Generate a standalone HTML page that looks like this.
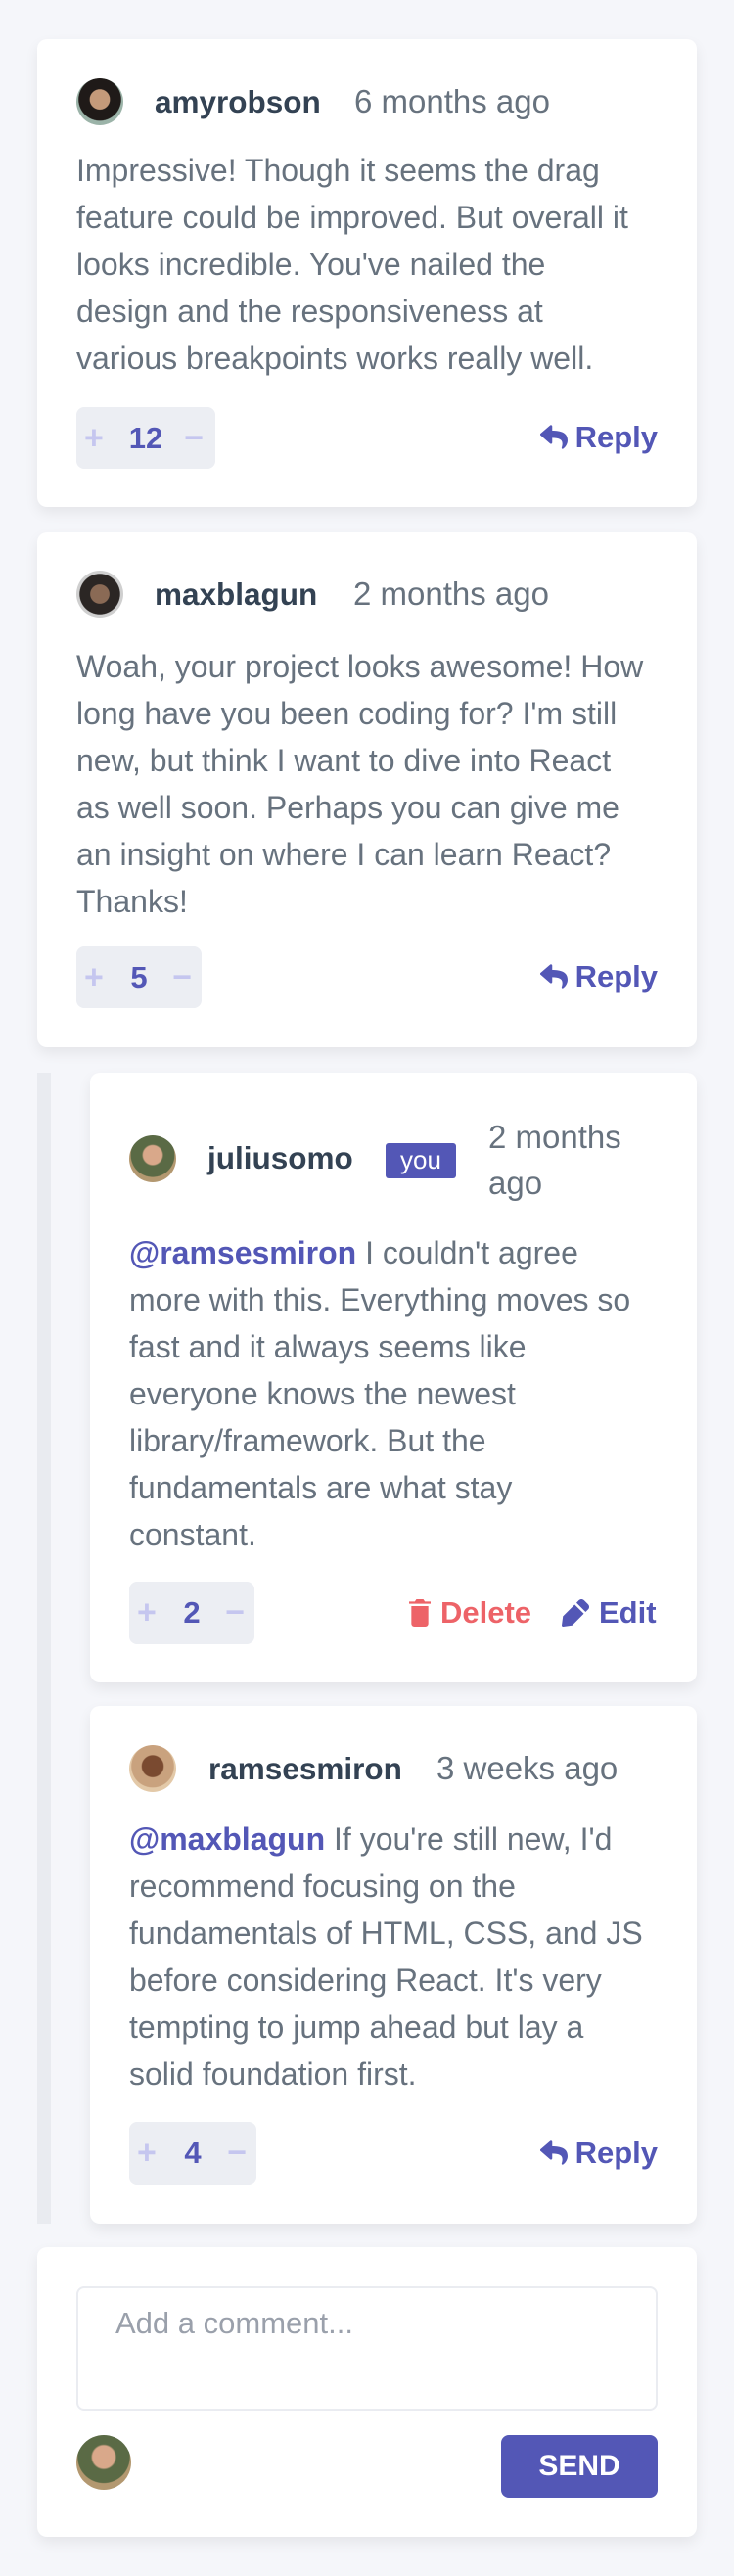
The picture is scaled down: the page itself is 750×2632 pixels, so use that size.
<!DOCTYPE html>
<html><head><meta charset="utf-8"><style>
*{margin:0;padding:0;box-sizing:border-box}
body{width:750px;height:2632px;background:#f5f6fa;font-family:"Liberation Sans",sans-serif;position:relative;overflow:hidden}
.card{position:absolute;background:#fff;border-radius:10px;box-shadow:0 6px 14px rgba(0,0,0,0.07)}
.a{position:absolute}
.av{position:absolute;width:48px;height:48px;border-radius:50%}
.name{position:absolute;font-size:31.5px;font-weight:bold;color:#334253;line-height:40px;transform:translateY(-50%)}
.time{position:absolute;font-size:33px;color:#67727e;line-height:40px}
.body{position:absolute;font-size:32px;color:#67727e;line-height:48px;white-space:nowrap}
.body b{color:#5357b6;font-weight:bold}
.vote{position:absolute;background:#eceef3;border-radius:8px;height:63px;font-size:31px;font-weight:bold;color:#5357b6}
.vote .p,.vote .m{position:absolute;top:50%;color:#c5c6ef;transform:translateY(-50%);font-size:34px;font-weight:bold}
.vote .n{position:absolute;top:50%;transform:translate(-50%,-50%);left:50%}
.act{position:absolute;font-size:31px;font-weight:bold;color:#5357b6;line-height:40px;display:flex;align-items:center;gap:8px}
</style></head><body>
<div class="a" style="left:38px;top:1096px;width:14px;height:1176px;background:#e9ebf0"></div>

<div class="card" style="left:38px;top:40px;width:674px;height:478px"></div>
<div class="av" style="left:78px;top:80px;background:radial-gradient(circle at 50% 45%,#c49a7a 0 28%,#1f1a18 30% 60%,#9bb3a8 62%)"></div>
<div class="name" style="left:158px;top:104px">amyrobson</div>
<div class="time" style="left:362px;top:84px">6 months ago</div>
<div class="body" style="left:78px;top:150px">Impressive! Though it seems the drag<br>feature could be improved. But overall it<br>looks incredible. You've nailed the<br>design and the responsiveness at<br>various breakpoints works really well.</div>
<div class="vote" style="left:78px;top:416px;width:142px"><span class="p" style="left:8px">+</span><span class="n">12</span><span class="m" style="right:12px">−</span></div>
<div class="act" style="right:78px;top:427px"><svg width="28" height="26" viewBox="0 0 14 13"><path d="M.23 4.46 5.05.31c.42-.36 1.08-.07 1.08.5v2.18c4.38.05 7.86.93 7.86 5.08 0 1.68-1.08 3.34-2.28 4.2-.37.27-.91-.07-.77-.51 1.23-3.94-.59-4.99-4.81-5.05v2.4c0 .57-.66.86-1.08.5L.23 5.46a.66.66 0 0 1 0-1z" fill="#5357b6"/></svg>Reply</div>

<div class="card" style="left:38px;top:544px;width:674px;height:526px"></div>
<div class="av" style="left:78px;top:583px;background:radial-gradient(circle at 50% 50%,#8a6a55 0 28%,#2b2624 30% 60%,#cfcfcf 62%)"></div>
<div class="name" style="left:158px;top:607px">maxblagun</div>
<div class="time" style="left:361px;top:587px">2 months ago</div>
<div class="body" style="left:78px;top:657px">Woah, your project looks awesome! How<br>long have you been coding for? I'm still<br>new, but think I want to dive into React<br>as well soon. Perhaps you can give me<br>an insight on where I can learn React?<br>Thanks!</div>
<div class="vote" style="left:78px;top:967px;width:128px"><span class="p" style="left:8px">+</span><span class="n">5</span><span class="m" style="right:10px">−</span></div>
<div class="act" style="right:78px;top:978px"><svg width="28" height="26" viewBox="0 0 14 13"><path d="M.23 4.46 5.05.31c.42-.36 1.08-.07 1.08.5v2.18c4.38.05 7.86.93 7.86 5.08 0 1.68-1.08 3.34-2.28 4.2-.37.27-.91-.07-.77-.51 1.23-3.94-.59-4.99-4.81-5.05v2.4c0 .57-.66.86-1.08.5L.23 5.46a.66.66 0 0 1 0-1z" fill="#5357b6"/></svg>Reply</div>

<div class="card" style="left:92px;top:1096px;width:620px;height:623px"></div>
<div class="av" style="left:132px;top:1160px;background:radial-gradient(circle at 50% 42%,#d9a88a 0 26%,#5a6a45 30% 60%,#b39870 62%)"></div>
<div class="name" style="left:212px;top:1183px">juliusomo</div>
<div class="a" style="left:394px;top:1168px;width:72px;height:36px;background:#5357b6;border-radius:3px;color:#fff;font-size:26px;text-align:center;line-height:34px">you</div>
<div class="time" style="left:499px;top:1138px;line-height:47px">2 months<br>ago</div>
<div class="body" style="left:132px;top:1256px"><b>@ramsesmiron</b> I couldn't agree<br>more with this. Everything moves so<br>fast and it always seems like<br>everyone knows the newest<br>library/framework. But the<br>fundamentals are what stay<br>constant.</div>
<div class="vote" style="left:132px;top:1616px;width:128px;height:64px"><span class="p" style="left:8px">+</span><span class="n">2</span><span class="m" style="right:10px">−</span></div>
<div class="act" style="left:418px;top:1628px;color:#ed6368;gap:10px"><svg width="22" height="28" viewBox="0 0 11 14"><path d="M1.17 12.44c0 .86.7 1.56 1.56 1.56h5.54c.86 0 1.56-.7 1.56-1.56V3.5H1.17v8.94zM11 1.17H8.06L7.28 0H3.72l-.78 1.17H0v1.17h11z" fill="#ed6368"/></svg>Delete</div>
<div class="act" style="left:574px;top:1628px;gap:10px"><svg width="28" height="28" viewBox="0 0 14 14"><path d="M13.48 2.65 11.35.52a1.8 1.8 0 0 0-2.55 0L7.5 1.82l4.68 4.68 1.3-1.3a1.8 1.8 0 0 0 0-2.55zM6.6 2.72.62 8.7.01 13.24c-.06.44.31.81.75.75l4.54-.61 5.98-5.98z" fill="#5357b6"/></svg>Edit</div>

<div class="card" style="left:92px;top:1743px;width:620px;height:529px"></div>
<div class="av" style="left:132px;top:1783px;background:radial-gradient(circle at 50% 45%,#7a4a30 0 30%,#c9a27e 33% 60%,#e3c9a8 62%)"></div>
<div class="name" style="left:213px;top:1807px">ramsesmiron</div>
<div class="time" style="left:446px;top:1787px">3 weeks ago</div>
<div class="body" style="left:132px;top:1855px"><b>@maxblagun</b> If you're still new, I'd<br>recommend focusing on the<br>fundamentals of HTML, CSS, and JS<br>before considering React. It's very<br>tempting to jump ahead but lay a<br>solid foundation first.</div>
<div class="vote" style="left:132px;top:2168px;width:130px;height:64px"><span class="p" style="left:8px">+</span><span class="n">4</span><span class="m" style="right:10px">−</span></div>
<div class="act" style="right:78px;top:2180px"><svg width="28" height="26" viewBox="0 0 14 13"><path d="M.23 4.46 5.05.31c.42-.36 1.08-.07 1.08.5v2.18c4.38.05 7.86.93 7.86 5.08 0 1.68-1.08 3.34-2.28 4.2-.37.27-.91-.07-.77-.51 1.23-3.94-.59-4.99-4.81-5.05v2.4c0 .57-.66.86-1.08.5L.23 5.46a.66.66 0 0 1 0-1z" fill="#5357b6"/></svg>Reply</div>

<div class="card" style="left:38px;top:2296px;width:674px;height:296px"></div>
<div class="a" style="left:78px;top:2336px;width:594px;height:127px;border:2px solid #eaecf1;border-radius:8px;font-size:31px;color:#9aa0ab;padding:18px 38px">Add a comment...</div>
<div class="av" style="left:78px;top:2488px;width:56px;height:56px;background:radial-gradient(circle at 50% 40%,#d9a88a 0 26%,#5a6a45 30% 60%,#b39870 62%)"></div>
<div class="a" style="left:512px;top:2488px;width:160px;height:64px;background:#5357b6;border-radius:8px;color:#fff;font-size:30px;font-weight:bold;text-align:center;line-height:64px">SEND</div>
</body></html>
